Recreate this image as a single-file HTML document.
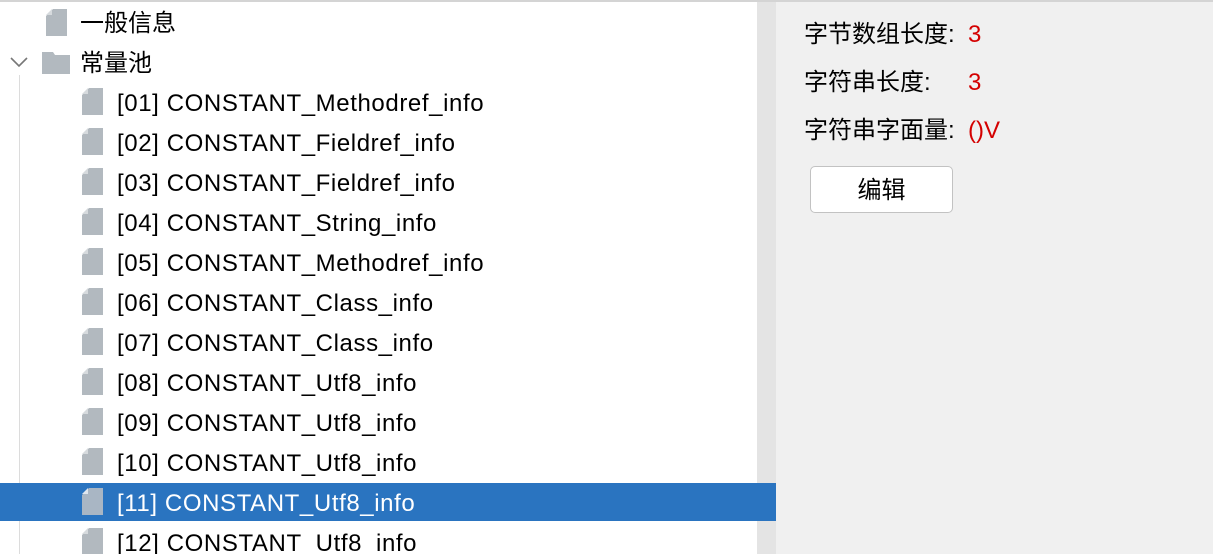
<!DOCTYPE html>
<html><head><meta charset="utf-8"><style>
html,body{margin:0;width:1213px;height:554px;overflow:hidden}
body{background:#f0f0f0;font-family:"Liberation Sans","Noto Sans CJK SC",sans-serif;position:relative}
.top{position:absolute;left:0;top:0;width:1213px;height:2px;background:#d4d4d4}
.left{position:absolute;left:0;top:2px;width:757px;height:552px;background:#fff}
.sb{position:absolute;left:757px;top:2px;width:19px;height:552px;background:#e4e4e4}
.guide{position:absolute;left:19px;top:75px;width:1px;height:479px;background:#dcdcdc}
.row{position:absolute;height:40px;line-height:42px;font-size:24px;letter-spacing:0.6px;color:#000;white-space:nowrap}
.sel{position:absolute;left:0;top:483px;width:776px;height:38px;background:#2a74c0}
.ico{position:absolute}
.lab{position:absolute;left:804px;font-size:24px;line-height:32px}
.val{position:absolute;left:968px;font-size:24px;line-height:32px;color:#d40000}
.btn{position:absolute;left:810px;top:166px;width:141px;height:45px;border:1px solid #c2c2c2;border-radius:5px;background:#fff;font-size:24px;line-height:47px;text-align:center;box-sizing:content-box}
</style></head><body>
<div class="top"></div>
<div class="left"></div>
<div class="sb"></div>
<div class="guide"></div>
<div class="sel"></div>
<svg class="ico" style="left:46px;top:9px" width="21" height="27"><path d="M7 0H21V27H0V7Z" fill="#b2b9bf"/><path d="M0 6L6 0V6Z" fill="#d6dadd"/></svg>
<div class="row" style="left:80px;top:3px;letter-spacing:0">一般信息</div>
<svg class="ico" style="left:10px;top:56px" width="18" height="12"><path d="M1 2L9 10L17 2" stroke="#777" stroke-width="1.6" fill="none"/></svg>
<svg class="ico" style="left:42px;top:52px" width="28" height="22"><path d="M0 0H11L13 3H28V22H0Z" fill="#b2b9bf"/></svg>
<div class="row" style="left:80px;top:43px;letter-spacing:0">常量池</div>
<div id="items"></div>
<script>
var n=["Methodref","Fieldref","Fieldref","String","Methodref","Class","Class","Utf8","Utf8","Utf8","Utf8","Utf8"];
var h="";
for(var i=0;i<12;i++){var y=83+i*40;var s=i==10;
h+='<svg class="ico" style="left:82px;top:'+(y+5)+'px" width="21" height="27"><path d="M7 0H21V27H0V7Z" fill="'+(s?'#a9b6c4':'#b2b9bf')+'"/><path d="M0 6L6 0V6Z" fill="'+(s?'#dfe6ee':'#d6dadd')+'"/></svg>';
h+='<div class="row" style="left:117px;top:'+y+'px;'+(s?'color:#fff':'')+'">['+String(i+1).padStart(2,'0')+'] CONSTANT_'+n[i]+'_info</div>';}
document.getElementById('items').innerHTML=h;
</script>
<div class="lab" style="top:19px">字节数组长度:</div><div class="val" style="top:19px">3</div>
<div class="lab" style="top:67px">字符串长度:</div><div class="val" style="top:67px">3</div>
<div class="lab" style="top:115px">字符串字面量:</div><div class="val" style="top:115px">()V</div>
<div class="btn">编辑</div>
</body></html>
